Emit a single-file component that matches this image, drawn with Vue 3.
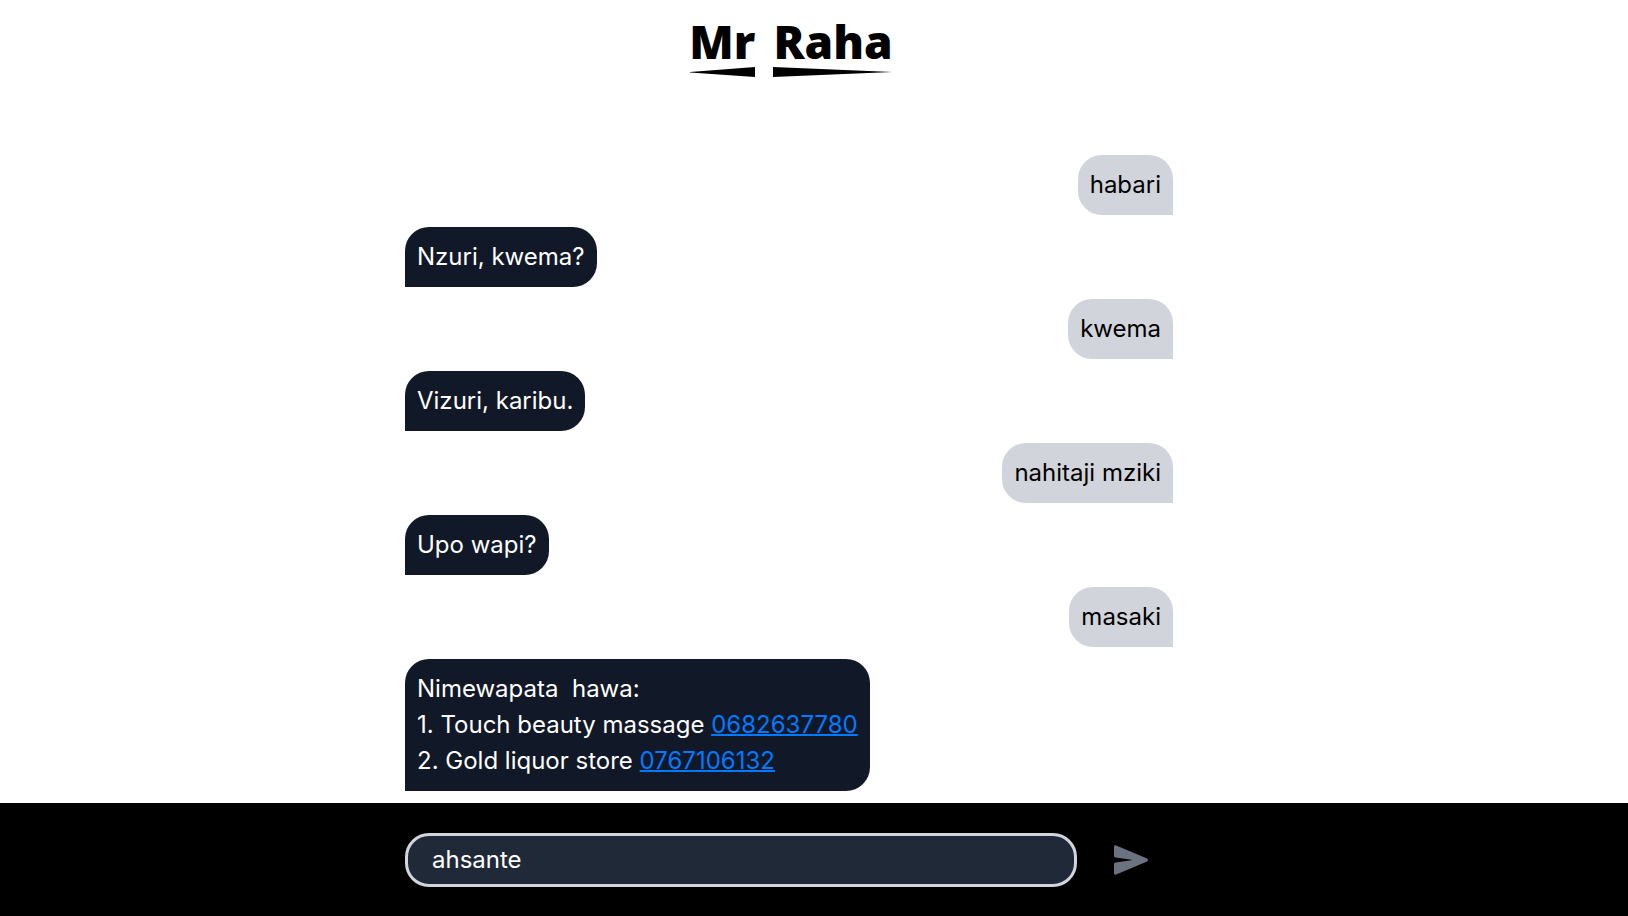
<script setup>
import { ref } from 'vue'

const draft = ref('ahsante')
const messages = ref([
  { from: 'user', lines: [{ text: 'habari' }] },
  { from: 'bot', lines: [{ text: 'Nzuri, kwema?' }] },
  { from: 'user', lines: [{ text: 'kwema' }] },
  { from: 'bot', lines: [{ text: 'Vizuri, karibu.' }] },
  { from: 'user', lines: [{ text: 'nahitaji mziki' }] },
  { from: 'bot', lines: [{ text: 'Upo wapi?' }] },
  { from: 'user', lines: [{ text: 'masaki' }] },
  {
    from: 'bot',
    lines: [
      { text: 'Nimewapata  hawa:' },
      { text: '1. Touch beauty massage ', phone: '0682637780' },
      { text: '2. Gold liquor store ', phone: '0767106132' },
    ],
  },
])

function send() {
  const text = draft.value.trim()
  if (!text) return
  messages.value.push({ from: 'user', lines: [{ text }] })
  draft.value = ''
}
</script>

<template>
  <div class="page">
    <header class="header">
      <h1 class="brand">
        <span class="word">
          <span>Mr</span>
          <svg class="wedge" viewBox="0 0 66 10" preserveAspectRatio="none" aria-hidden="true">
            <path d="M1 5 66 0v10L1 5.500z" />
          </svg>
        </span>
        <span class="word">
          <span>Raha</span>
          <svg class="wedge" viewBox="0 0 117 10" preserveAspectRatio="none" aria-hidden="true">
            <path d="M0 0 117 5 0 10z" />
          </svg>
        </span>
      </h1>
    </header>

    <main class="chat">
      <ul class="column messages">
        <li v-for="(message, i) in messages" :key="i" class="bubble" :class="message.from">
          <p v-for="(line, j) in message.lines" :key="j" class="line">{{ line.text }}<a v-if="line.phone" :href="'tel:' + line.phone">{{ line.phone }}</a></p>
        </li>
      </ul>
    </main>

    <footer class="footer">
      <form class="column composer" @submit.prevent="send">
        <input v-model="draft" class="field" type="text" aria-label="Message" autocomplete="off" />
        <button class="send" type="submit" aria-label="Send">
          <svg width="34" height="30" viewBox="0 0 34 30" aria-hidden="true">
            <path d="M0 2C0 .6 1 0 2.200.5L32.500 13.200C34.400 14 34.400 16 32.500 16.800L2.200 29.500C1 30 0 29.400 0 28V19.200C0 18.200.6 17.800 1.500 17.600L17.500 15.300V14.700L1.500 12.400C.6 12.200 0 11.800 0 10.800z" />
          </svg>
        </button>
      </form>
    </footer>
  </div>
</template>

<style>
body {
  margin: 0;
  background: #fff;
}
</style>

<style scoped>
.page {
  display: flex;
  flex-direction: column;
  min-height: 100vh;
  font-family: Inter, 'Liberation Sans', sans-serif;
  font-size: 24px;
  line-height: 36px;
}

.header {
  display: flex;
  justify-content: center;
  padding: 20px 46px 0 0;
}

.brand {
  display: flex;
  gap: 18px;
  margin: 0;
  font-family: 'Open Sans', 'Noto Sans', sans-serif;
  font-size: 46px;
  font-weight: 800;
  line-height: 43px;
  color: #000;
}

.word {
  display: flex;
  flex-direction: column;
  gap: 4px;
}

.wedge {
  display: block;
  width: 100%;
  height: 10px;
}

.chat {
  flex: 1;
  padding: 78px 50px 12px 0;
}

.column {
  box-sizing: border-box;
  width: 100%;
  max-width: 768px;
  margin: 0 auto;
}

.messages {
  display: flex;
  flex-direction: column;
  gap: 12px;
  padding: 0;
  list-style: none;
}

.bubble {
  padding: 12px;
  border-radius: 24px;
}

.user {
  align-self: flex-end;
  border-bottom-right-radius: 0;
  background: #d1d5db;
  color: #000;
}

.bot {
  align-self: flex-start;
  border-bottom-left-radius: 0;
  background: #111827;
  color: #fff;
}

.line {
  margin: 0;
  white-space: pre-wrap;
}

.line a {
  color: #007bff;
  text-decoration: underline 2px;
}

.footer {
  padding: 30px 50px 29px 0;
  background: #000;
}

.composer {
  display: flex;
  align-items: center;
}

.field {
  flex: 1;
  box-sizing: border-box;
  min-width: 0;
  height: 54px;
  padding: 0 24px 2px;
  border: 3px solid #d1d5db;
  border-radius: 24px;
  background: #1f2937;
  color: #fff;
  font: inherit;
  outline: none;
}

.send {
  display: flex;
  align-items: center;
  justify-content: center;
  width: 96px;
  padding: 0 0 0 12px;
  border: 0;
  background: none;
  cursor: pointer;
}

.send svg {
  fill: #6b7280;
}
</style>
